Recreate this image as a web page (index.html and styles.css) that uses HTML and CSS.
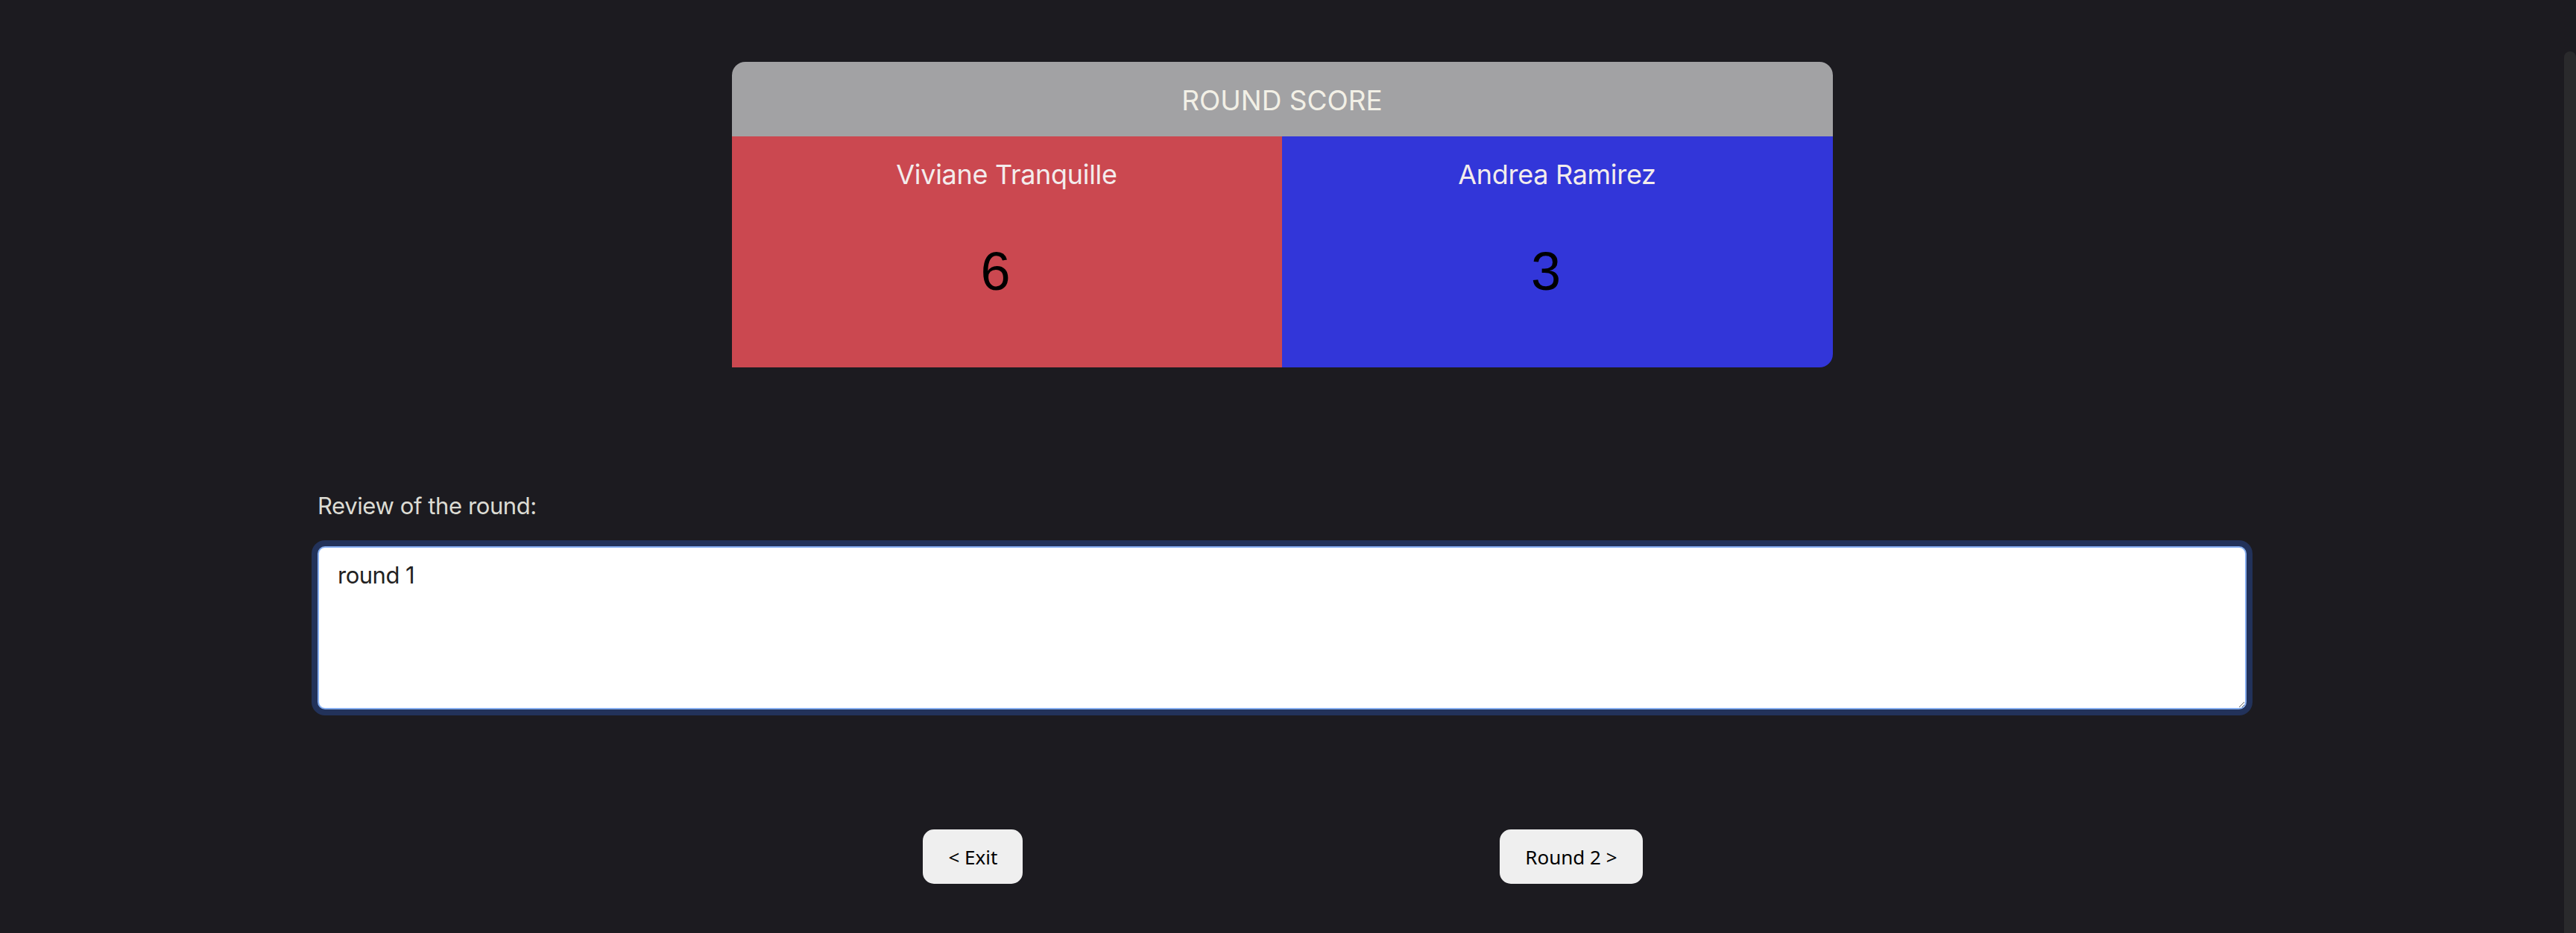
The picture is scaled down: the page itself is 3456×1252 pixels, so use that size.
FILE: index.html
```html
<!DOCTYPE html>
<html lang="en">
<head>
<meta charset="utf-8">
<title>Round score</title>
<link rel="stylesheet" href="styles.css">
</head>
<body>
<div class="shell">
  <main class="page">
    <section class="card">
      <div class="card-head">ROUND SCORE</div>
      <div class="cols">
        <div class="col col-red">
          <div class="name">Viviane Tranquille</div>
          <div class="score">6</div>
        </div>
        <div class="col col-blue">
          <div class="name">Andrea Ramirez</div>
          <div class="score">3</div>
        </div>
      </div>
    </section>
    <section class="review">
      <label class="review-label" for="review">Review of the round:</label>
      <textarea id="review" class="review-box">round 1</textarea>
    </section>
    <nav class="actions">
      <button class="btn">&lt; Exit</button>
      <button class="btn">Round 2 &gt;</button>
    </nav>
  </main>
  <div class="scrollbar"><div class="thumb"></div></div>
</div>
</body>
</html>
```

FILE: styles.css
```css
html, body {
  margin: 0;
  padding: 0;
  background: #1c1b20;
  height: 100%;
  overflow: hidden;
}
body {
  font-family: Inter, "Noto Sans", sans-serif;
}
.shell {
  display: flex;
  height: 1252px;
}
.page {
  flex: 1;
  display: flex;
  flex-direction: column;
  align-items: center;
  padding-top: 83px;
}
.scrollbar {
  width: 16px;
  display: flex;
  flex-direction: column;
  padding-top: 69px;
  box-sizing: border-box;
}
.thumb {
  flex: 1;
  background: #2a2a2c;
  border-radius: 8px 8px 0 0;
}
.card {
  width: 1477px;
  border-radius: 18px 18px 18px 0;
  overflow: hidden;
}
.card-head {
  height: 100px;
  background: #a2a2a4;
  color: #f2f0e6;
  font-size: 37px;
  display: flex;
  align-items: center;
  justify-content: center;
  padding-top: 3px;
  box-sizing: border-box;
}
.cols {
  display: grid;
  grid-template-columns: 738px 1fr;
  height: 310px;
}
.col {
  display: flex;
  flex-direction: column;
  align-items: center;
  padding-top: 28px;
}
.col-red { background: #cb4850; }
.col-blue { background: #3236d9; }
.name {
  color: #f3ecec;
  font-size: 36px;
  letter-spacing: -0.3px;
  line-height: 46px;
}
.score {
  margin-top: 71px;
  font-family: "Liberation Sans", Arial, sans-serif;
  font-size: 72px;
  line-height: 1;
  color: #000;
  padding-right: 30px;
}
.review {
  width: 2588px;
  margin-top: 166px;
  display: flex;
  flex-direction: column;
}
.review-label {
  color: #dcdcd4;
  font-size: 31px;
  letter-spacing: -0.4px;
  line-height: 40px;
}
.review-box {
  margin-top: 34px;
  height: 219px;
  box-sizing: border-box;
  border: 2px solid #86aef0;
  border-radius: 10px;
  box-shadow: 0 0 0 8px #22325a;
  background: #fff;
  color: #222;
  font-family: Inter, "Noto Sans", sans-serif;
  font-size: 31px;
  letter-spacing: -0.5px;
  line-height: 40px;
  padding: 17px 25px;
  outline: none;
  resize: both;
}
.actions {
  margin-top: 161px;
  display: flex;
  gap: 640px;
  padding-left: 2px;
}
.btn {
  height: 73px;
  padding: 0 34px;
  border: none;
  border-radius: 15px;
  background: #efefef;
  color: #000;
  font-family: "Noto Sans", Inter, sans-serif;
  font-size: 26px;
}
```
